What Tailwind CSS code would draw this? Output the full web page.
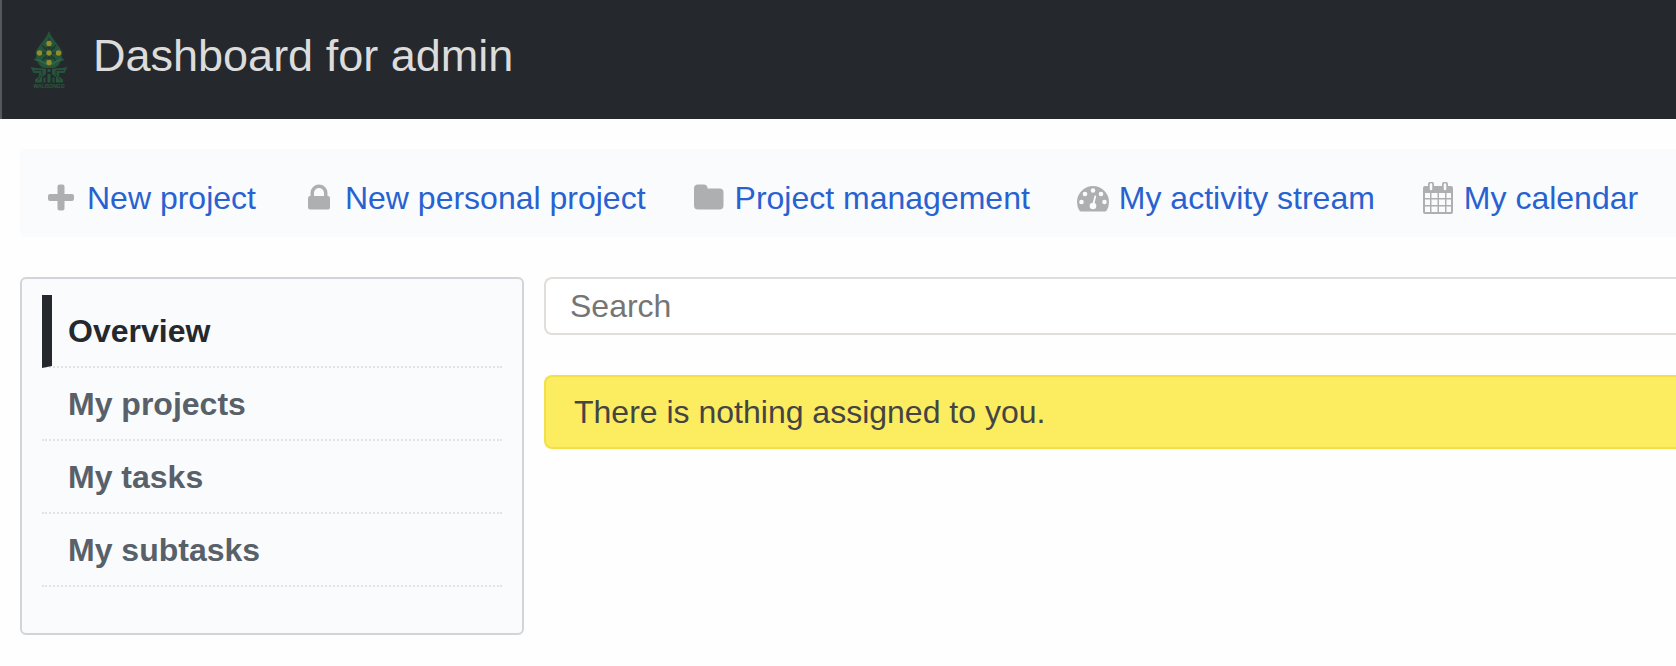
<!DOCTYPE html>
<html lang="en">
<head>
    <meta charset="UTF-8">
    <meta name="viewport" content="width=device-width, initial-scale=1.0">
    <title>Dashboard for admin</title>
    <script src="https://cdn.jsdelivr.net/npm/@tailwindcss/browser@4"></script>
</head>
<body class="bg-[#fefefe] text-[32px] leading-[40px] text-[#444] font-['Liberation_Sans',Arial,sans-serif] overflow-x-hidden">
    <header class="flex items-center gap-6 h-[119px] bg-[#25292e] border-l-2 border-[#55585c] pl-[27px]">
        <a href="/" aria-label="Home">
            <svg class="w-10 h-[58px]" viewBox="0 0 40 58">
                <path d="M20 0C17 8 10 14 6.500 21C7.500 25 8 27 4.500 28.500C6 30 8 30 9 31C10 35 14 37 17 37H23C26 37 30 35 31 31C32 30 34 30 35.500 28.500C32 27 32.500 25 33.500 21C30 14 23 8 20 0Z" fill="#26543a"/>
                <path d="M20 7V34M13 14L27 30M27 14L13 30M10 22H30M14 17H26M14 27H26" stroke="#1e3a33" stroke-width="1.500" fill="none"/>
                <path d="M8 29C13 28 13 33 20 34C27 33 27 28 32 29" stroke="#2f6a45" stroke-width="1.500" fill="none"/>
                <g fill="#948c2b">
                    <circle cx="20" cy="12.500" r="2.700"/>
                    <circle cx="10.500" cy="22" r="2.700"/>
                    <circle cx="20" cy="22" r="2.700"/>
                    <circle cx="29.500" cy="22" r="2.700"/>
                    <circle cx="20" cy="31.500" r="2.700"/>
                </g>
                <path d="M1.500 35.500C6 38 11 36.500 17 38V43L13 46V51.500H6V48.500L10 45.500V42H4.500ZM38.500 35.500C34 38 29 36.500 23 38V43L27 46V51.500H34V48.500L30 45.500V42H35.500Z" fill="#26543a"/>
                <path d="M5 39.500H13V43.500L9 49.500M35 39.500H27V43.500L31 49.500" stroke="#1e3431" stroke-width="1" fill="none"/>
                <path d="M18.500 38H21.500V41H18.500ZM18.500 43H21.500V51.500H18.500ZM14.500 46.500H16.500V51.500H14.500ZM23.500 46.500H25.500V51.500H23.500Z" fill="#26543a"/>
                <text x="20" y="57" text-anchor="middle" font-size="5" font-weight="bold" fill="#2b5a40">WALISONGO</text>
            </svg>
        </a>
        <h1 class="text-[45px] leading-[54px] text-[#dcdcdc] pb-2">Dashboard for admin</h1>
    </header>

    <nav class="ml-5 mt-[30px] h-[88px] flex items-center gap-[47px] bg-[#fafbfd] rounded-l-md pl-[25px] pt-[10px] text-[#2862d0] whitespace-nowrap">
        <a href="#" class="flex items-center gap-[10px] hover:text-[#333]">
            <svg class="w-8 h-8 fill-[#aeafb1]" viewBox="0 0 32 32"><path d="M14.500 2.500h3q2 0 2 2v7.500h7.500q2 0 2 2v3q0 2-2 2h-7.500v7.500q0 2-2 2h-3q-2 0-2-2v-7.500h-7.500q-2 0-2-2v-3q0-2 2-2h7.500v-7.500q0-2 2-2z"/></svg>
            New project
        </a>
        <a href="#" class="flex items-center gap-[10px] hover:text-[#333]">
            <svg class="w-8 h-8 fill-[#aeafb1]" viewBox="0 0 32 32"><path fill-rule="evenodd" d="M7.500 14V11a8.500 8.500 0 0 1 17 0v3h.5q2 0 2 2v9.500q0 2-2 2H7q-2 0-2-2V16q0-2 2-2zM11 14h10v-3a5 5 0 0 0-10 0z"/></svg>
            New personal project
        </a>
        <a href="#" class="flex items-center gap-[10px] hover:text-[#333]">
            <svg class="w-8 h-8 fill-[#aeafb1]" viewBox="0 0 32 32"><path d="M1 6.500a4 4 0 0 1 4-4h5.500a4 4 0 0 1 4 4h12a4 4 0 0 1 4 4v13a4 4 0 0 1-4 4H5a4 4 0 0 1-4-4z"/></svg>
            Project management
        </a>
        <a href="#" class="flex items-center gap-[10px] hover:text-[#333]">
            <svg class="w-8 h-8" viewBox="0 0 32 32">
                <path fill="#aeafb1" d="M0 20a16 16 0 0 1 32 0q0 5-2.500 8.800-.5.700-1.500.7H4q-1 0-1.500-.7Q0 25 0 20z"/>
                <g fill="#fafbfd">
                    <circle cx="4.500" cy="20" r="2.300"/>
                    <circle cx="8" cy="12" r="2.300"/>
                    <circle cx="16" cy="8.500" r="2.300"/>
                    <circle cx="24" cy="12" r="2.300"/>
                    <circle cx="27.500" cy="20" r="2.300"/>
                    <circle cx="16" cy="24" r="3.300"/>
                </g>
                <path d="M16.200 23L18.200 14.500" stroke="#fafbfd" stroke-width="1.800" stroke-linecap="round"/>
            </svg>
            My activity stream
        </a>
        <a href="#" class="flex items-center gap-[10px] hover:text-[#333]">
            <svg class="w-8 h-8" viewBox="0 0 32 32">
                <path fill="#aeafb1" d="M1 6q0-2 2-2h26q2 0 2 2v24q0 2-2 2H3q-2 0-2-2z"/>
                <path fill="#fafbfd" d="M3 11h5v5H3zM9.500 11h6v5h-6zM17 11h6v5h-6zM24.500 11h4.500v5h-4.500zM3 17.500h5v5.500H3zM9.500 17.500h6v5.500h-6zM17 17.500h6v5.500h-6zM24.500 17.500h4.500v5.500h-4.500zM3 24.500h5V30H3zM9.500 24.500h6V30h-6zM17 24.500h6V30h-6zM24.500 24.500h4.500V30h-4.500z"/>
                <path d="M9 2.500v4.500M23 2.500v4.500" stroke="#aeafb1" stroke-width="6" stroke-linecap="round"/>
                <path d="M9 2.500v4.500M23 2.500v4.500" stroke="#fafbfd" stroke-width="2.500" stroke-linecap="round"/>
            </svg>
            My calendar
        </a>
    </nav>

    <div class="flex items-start gap-5 pl-5 mt-10">
        <aside class="w-[504px] shrink-0 bg-[#fafbfd] border-2 border-[#d1d5da] rounded-md px-5 pt-4 pb-[46px]">
            <ul class="font-bold text-[#586069]">
                <li class="h-[73px] flex items-center border-b-2 border-dotted border-b-[#e1e3e5] border-l-10 border-l-[#25292e] [border-left-style:solid] pl-4"><a href="#" class="text-[#25292e]">Overview</a></li>
                <li class="h-[73px] flex items-center border-b-2 border-dotted border-[#e1e3e5] pl-[26px]"><a href="#">My projects</a></li>
                <li class="h-[73px] flex items-center border-b-2 border-dotted border-[#e1e3e5] pl-[26px]"><a href="#">My tasks</a></li>
                <li class="h-[73px] flex items-center border-b-2 border-dotted border-[#e1e3e5] pl-[26px]"><a href="#">My subtasks</a></li>
            </ul>
        </aside>
        <main class="grow">
            <form>
                <input type="text" placeholder="Search" aria-label="Search"
                    class="block w-full h-[58px] bg-white border-2 border-r-0 border-[#e0dddb] rounded-l-lg pl-6 placeholder:text-[#757575] focus:outline-none">
            </form>
            <p class="mt-10 h-[74px] flex items-center bg-[#fcec60] border-2 border-r-0 border-[#f3df49] rounded-l-lg pl-7">There is nothing assigned to you.</p>
        </main>
    </div>
</body>
</html>
